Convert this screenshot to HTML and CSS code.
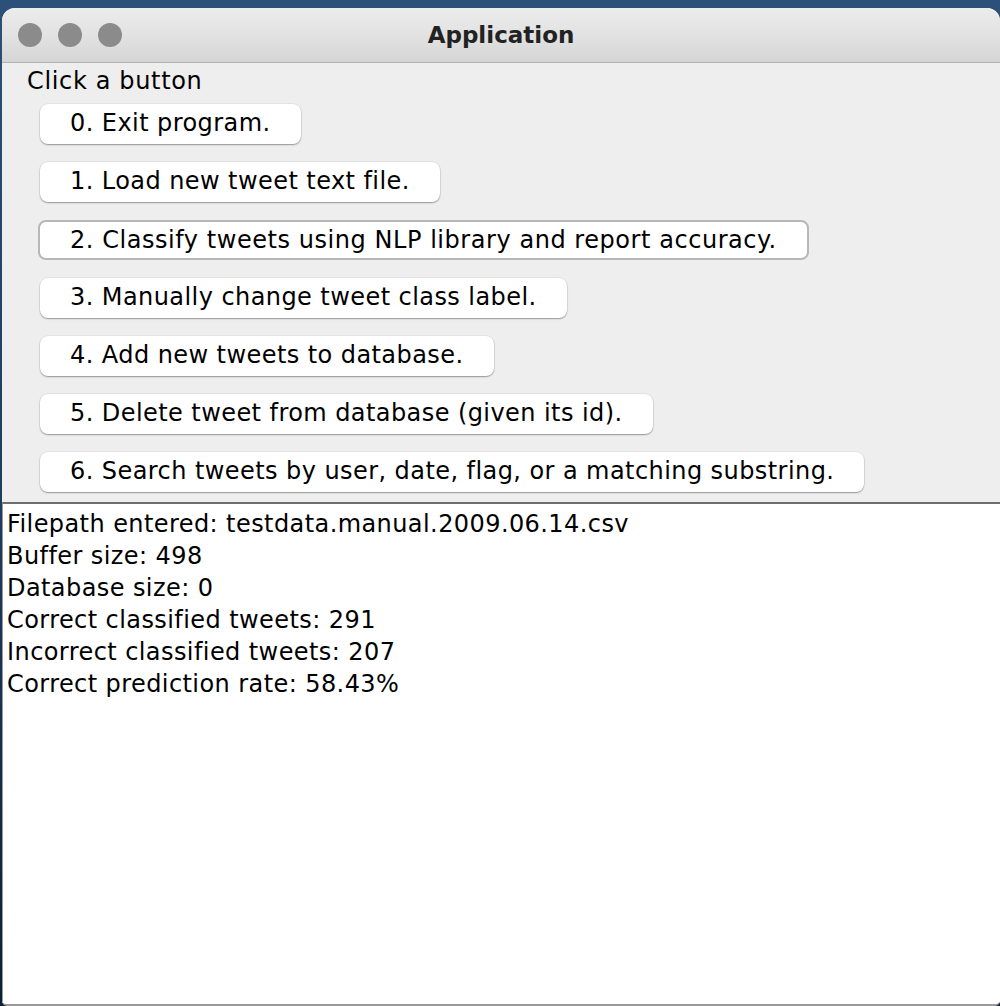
FILE: index.html
```html
<!DOCTYPE html>
<html>
<head>
<meta charset="utf-8">
<link rel="stylesheet" href="styles.css">
</head>
<body>
<div class="window">
  <div class="titlebar">
    <div class="lights">
      <span class="light"></span><span class="light"></span><span class="light"></span>
    </div>
    <div class="title">Application</div>
  </div>
  <div class="panel">
    <div class="label">Click a button</div>
    <div class="buttons">
      <div class="btn">0. Exit program.</div>
      <div class="btn">1. Load new tweet text file.</div>
      <div class="btn focused">2. Classify tweets using NLP library and report accuracy.</div>
      <div class="btn">3. Manually change tweet class label.</div>
      <div class="btn">4. Add new tweets to database.</div>
      <div class="btn">5. Delete tweet from database (given its id).</div>
      <div class="btn">6. Search tweets by user, date, flag, or a matching substring.</div>
    </div>
  </div>
  <div class="output">
    <div class="line">Filepath entered: testdata.manual.2009.06.14.csv</div>
    <div class="line">Buffer size: 498</div>
    <div class="line">Database size: 0</div>
    <div class="line">Correct classified tweets: 291</div>
    <div class="line">Incorrect classified tweets: 207</div>
    <div class="line">Correct prediction rate: 58.43%</div>
  </div>
</div>
</body>
</html>
```
FILE: styles.css
```css
html, body {
  margin: 0;
  padding: 0;
  height: 1006px;
  overflow: hidden;
}
body {
  background: linear-gradient(180deg, #2b5079 0%, #1d3c5f 50%, #0e2035 100%);
  font-family: "DejaVu Sans", "Liberation Sans", sans-serif;
  color: #000;
}
.window {
  margin: 8px 0 0 2px;
  width: 998px;
  height: 998px;
  border-radius: 13px 13px 5px 5px;
  overflow: hidden;
  background: #eeeeee;
  display: flex;
  flex-direction: column;
  border-bottom: 2px solid #9a9a9a;
  box-sizing: border-box;
}
.titlebar {
  height: 54px;
  flex: none;
  background: linear-gradient(180deg, #ececec 0%, #e2e2e2 50%, #d5d5d5 100%);
  border-bottom: 1px solid #b2b2b2;
  display: flex;
  align-items: center;
  position: relative;
}
.lights {
  display: flex;
  gap: 16px;
  padding-left: 16px;
}
.light {
  width: 24px;
  height: 24px;
  border-radius: 50%;
  background: #8b8b8b;
}
.title {
  position: absolute;
  left: 0;
  right: 0;
  text-align: center;
  font-weight: bold;
  font-size: 23px;
  color: #222;
  top: 14px;
}
.panel {
  flex: none;
  height: 439px;
  padding-left: 25px;
  box-sizing: border-box;
  background: #eeeeee;
}
.label {
  font-size: 24px;
  letter-spacing: 0.65px;
  line-height: 28px;
  padding-top: 4px;
}
.buttons {
  display: flex;
  flex-direction: column;
  align-items: flex-start;
  gap: 18px;
  padding-left: 13px;
  padding-top: 9px;
}
.btn {
  background: #fff;
  border-radius: 8px;
  height: 40px;
  line-height: 39px;
  font-size: 24px;
  letter-spacing: 0.43px;
  padding: 0 30px;
  box-sizing: border-box;
  box-shadow: 0 1px 1.5px rgba(0,0,0,0.35), 0 0 0 0.5px rgba(0,0,0,0.08);
  white-space: nowrap;
}
.btn.focused {
  margin-left: -2px;
  border: 2px solid #b8b8b8;
  line-height: 37px;
  letter-spacing: 0.55px;
  padding: 0 30px 0 30px;
  box-shadow: none;
}
.output {
  flex: 1;
  background: #fff;
  border-top: 2px solid #6e6e6e;
  border-left: 1px solid #9a9a9a;
  padding: 4px 0 0 4px;
}
.line {
  font-size: 24px;
  letter-spacing: 0.42px;
  line-height: 32px;
  white-space: nowrap;
}
```
